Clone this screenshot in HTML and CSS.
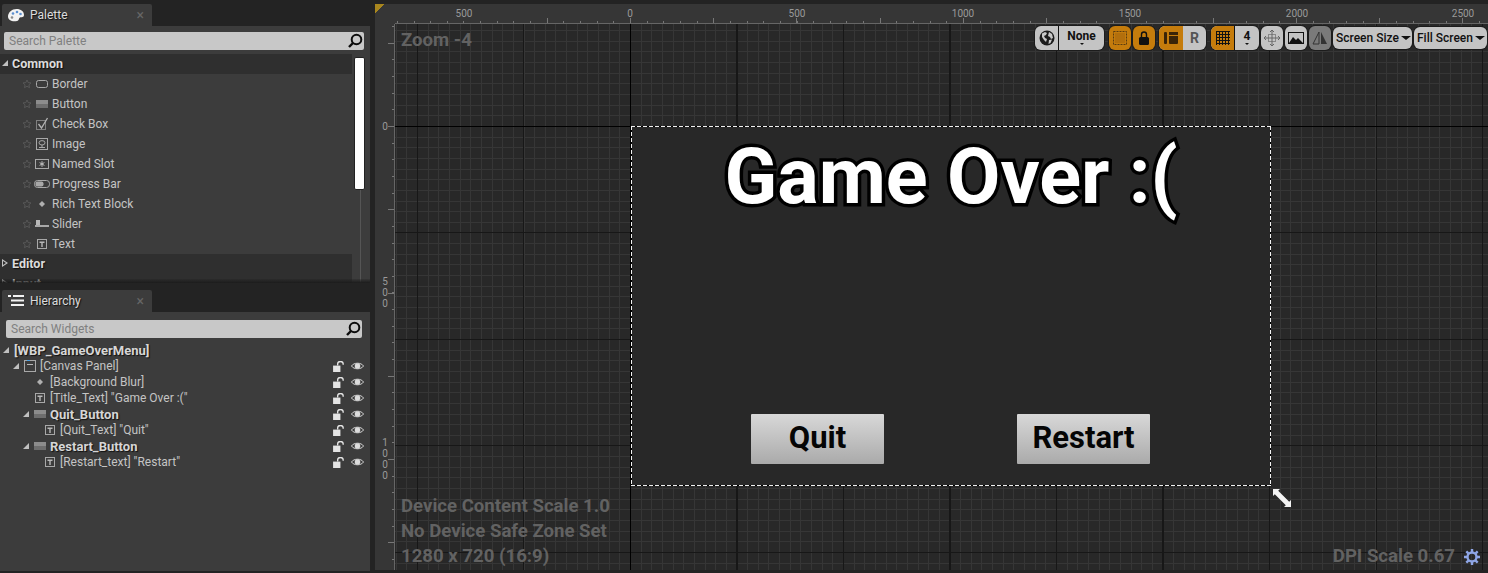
FILE: index.html
```html
<!DOCTYPE html>
<html lang="en">
<head>
  <meta charset="UTF-8" />
  <title>WBP_GameOverMenu</title>
  <link rel="stylesheet" href="styles.css">
</head>
<body>
  <svg class="sprites" width="0" height="0">
    <symbol id="i-star" viewBox="0 0 12 12"><path d="M6 1.2l1.4 3.1 3.4.4-2.5 2.3.7 3.4-3-1.7-3 1.7.7-3.4L1.2 4.7l3.4-.4z" fill="none" stroke="#5c5c5c"/></symbol>
    <symbol id="i-border" viewBox="0 0 14 14"><rect x="1.5" y="3.5" width="11" height="7" rx="2" fill="none" stroke="#a8a8a8"/></symbol>
    <symbol id="i-button" viewBox="0 0 14 14"><rect x="1" y="3" width="12" height="4" fill="#8c8c8c"/><rect x="1" y="7" width="12" height="4" fill="#6e6e6e"/></symbol>
    <symbol id="i-check" viewBox="0 0 14 14"><rect x="1.5" y="3.5" width="9" height="9" fill="none" stroke="#808080"/><path d="M3.5 7l3 4 6-10" fill="none" stroke="#b4b4b4" stroke-width="1.3"/></symbol>
    <symbol id="i-image" viewBox="0 0 14 14"><rect x="1.5" y="1.5" width="11" height="11" fill="none" stroke="#a8a8a8"/><ellipse cx="7" cy="5.8" rx="3" ry="2.2" fill="none" stroke="#a8a8a8"/><path d="M7 8v2.5M4 10.5h6" stroke="#a8a8a8"/></symbol>
    <symbol id="i-slot" viewBox="0 0 14 14"><rect x=".5" y="2.5" width="13" height="9" fill="none" stroke="#a8a8a8"/><path d="M7 4.2v5.6M4.6 5.6l4.8 2.8M9.4 5.6L4.6 8.4" stroke="#c0c0c0"/></symbol>
    <symbol id="i-progress" viewBox="0 0 16 14"><rect x=".5" y="3.5" width="15" height="7" rx="3" fill="none" stroke="#a8a8a8"/><rect x="1.5" y="4.5" width="8" height="5" rx="2" fill="#a8a8a8"/></symbol>
    <symbol id="i-diamond" viewBox="0 0 14 14"><path d="M7 4l3 3-3 3-3-3z" fill="#b0b0b0"/></symbol>
    <symbol id="i-slider" viewBox="0 0 14 14"><rect x="1" y="3" width="4" height="5" fill="#b8b8b8"/><rect x="0" y="8" width="14" height="2" fill="#a8a8a8"/></symbol>
    <symbol id="i-text" viewBox="0 0 14 14"><rect x="2.5" y="2.5" width="9" height="9" fill="none" stroke="#a8a8a8"/><path d="M4.5 4.5h5v1.4H7.7v4H6.3v-4H4.5z" fill="#b8b8b8"/></symbol>
    <symbol id="i-canvas" viewBox="0 0 14 14"><rect x="1.5" y="1.5" width="11" height="11" fill="none" stroke="#a8a8a8"/><path d="M4 5.5h6" stroke="#b8b8b8"/><path d="M4 1.5h3" stroke="#4aa3e8"/></symbol>
    <symbol id="i-lock-open" viewBox="0 0 14 12"><rect x="0" y="5" width="8" height="7" fill="#e4e4e4"/><path d="M5 5V3a3 2.5 0 0 1 6 0v1" fill="none" stroke="#e4e4e4" stroke-width="1.5"/></symbol>
    <symbol id="i-eye" viewBox="0 0 14 10"><path d="M.5 5C3 1 11 1 13.5 5 11 9 3 9 .5 5z" fill="none" stroke="#dcdcdc"/><circle cx="7" cy="5" r="3" fill="#dcdcdc"/></symbol>
    <symbol id="i-search" viewBox="0 0 16 16"><circle cx="9.5" cy="6.5" r="4.8" fill="none" stroke="#0c0c0c" stroke-width="2"/><path d="M6 10l-4 4" stroke="#0c0c0c" stroke-width="2.4"/></symbol>
  </svg>

  <aside class="side">
    <section class="dock">
      <div class="tab">
        <svg class="tab-icon" viewBox="0 0 16 14"><path d="M8.5 1C13 1 16 3.5 16 7c0 2.5-2.5 2-4 2.5s-.5 3-3 3.500C4 14 0 12 0 8.500 0 4.500 4 1 8.500 1z" fill="#f2f2f2"/><circle cx="5" cy="5.5" r="1.3" fill="#5b8fd0"/><circle cx="9" cy="4" r="1.3" fill="#5b8fd0"/><circle cx="12.5" cy="6" r="1.3" fill="#5b8fd0"/><circle cx="4" cy="9.5" r="1.3" fill="#8a8a8a"/></svg>
        <span class="tab-label">Palette</span>
        <span class="tab-close">&#215;</span>
      </div>
      <div class="panel palette-panel">
        <div class="search palette-search">
          <span>Search Palette</span>
          <svg class="search-icon"><use href="#i-search"/></svg>
        </div>
        <div class="palette-body">
          <div class="palette-list">
            <div class="group-head"><span class="arrow-open"></span>Common</div>
            <div class="item"><svg class="star"><use href="#i-star"/></svg><svg class="item-icon"><use href="#i-border"/></svg>Border</div>
            <div class="item"><svg class="star"><use href="#i-star"/></svg><svg class="item-icon"><use href="#i-button"/></svg>Button</div>
            <div class="item"><svg class="star"><use href="#i-star"/></svg><svg class="item-icon"><use href="#i-check"/></svg>Check Box</div>
            <div class="item"><svg class="star"><use href="#i-star"/></svg><svg class="item-icon"><use href="#i-image"/></svg>Image</div>
            <div class="item"><svg class="star"><use href="#i-star"/></svg><svg class="item-icon"><use href="#i-slot"/></svg>Named Slot</div>
            <div class="item"><svg class="star"><use href="#i-star"/></svg><svg class="item-icon"><use href="#i-progress"/></svg>Progress Bar</div>
            <div class="item"><svg class="star"><use href="#i-star"/></svg><svg class="item-icon"><use href="#i-diamond"/></svg>Rich Text Block</div>
            <div class="item"><svg class="star"><use href="#i-star"/></svg><svg class="item-icon"><use href="#i-slider"/></svg>Slider</div>
            <div class="item"><svg class="star"><use href="#i-star"/></svg><svg class="item-icon"><use href="#i-text"/></svg>Text</div>
            <div class="group-head"><span class="arrow-closed"></span>Editor</div>
            <div class="group-head"><span class="arrow-closed"></span>Input</div>
          </div>
          <div class="scrollbar"><div class="scroll-thumb"></div></div>
        </div>
      </div>
    </section>

    <section class="dock hierarchy">
      <div class="tab">
        <svg class="tab-icon" viewBox="0 0 16 14"><path d="M0 1h3v2H0zM5 1h11v2H5zM3 5.5h2v2H3zM5 5.5h11v2H5zM3 10h2v2H3zM5 10h11v2H5z" fill="#f2f2f2"/></svg>
        <span class="tab-label">Hierarchy</span>
        <span class="tab-close">&#215;</span>
      </div>
      <div class="panel hierarchy-panel">
        <div class="search widget-search">
          <span>Search Widgets</span>
          <svg class="search-icon"><use href="#i-search"/></svg>
        </div>
        <div class="tree">
          <div class="node depth-0 strong"><span class="arrow-slot"><span class="arrow-open"></span></span><span class="root-name">[WBP_GameOverMenu]</span></div>
          <div class="node depth-1"><span class="arrow-slot"><span class="arrow-open"></span></span><svg class="node-icon"><use href="#i-canvas"/></svg>[Canvas Panel]<span class="node-tools"><svg class="lock"><use href="#i-lock-open"/></svg><svg class="eye"><use href="#i-eye"/></svg></span></div>
          <div class="node depth-2"><span class="arrow-slot"></span><svg class="node-icon"><use href="#i-diamond"/></svg>[Background Blur]<span class="node-tools"><svg class="lock"><use href="#i-lock-open"/></svg><svg class="eye"><use href="#i-eye"/></svg></span></div>
          <div class="node depth-2"><span class="arrow-slot"></span><svg class="node-icon"><use href="#i-text"/></svg>[Title_Text] "Game Over :("<span class="node-tools"><svg class="lock"><use href="#i-lock-open"/></svg><svg class="eye"><use href="#i-eye"/></svg></span></div>
          <div class="node depth-2 strong"><span class="arrow-slot"><span class="arrow-open"></span></span><svg class="node-icon"><use href="#i-button"/></svg>Quit_Button<span class="node-tools"><svg class="lock"><use href="#i-lock-open"/></svg><svg class="eye"><use href="#i-eye"/></svg></span></div>
          <div class="node depth-3"><span class="arrow-slot"></span><svg class="node-icon"><use href="#i-text"/></svg>[Quit_Text] "Quit"<span class="node-tools"><svg class="lock"><use href="#i-lock-open"/></svg><svg class="eye"><use href="#i-eye"/></svg></span></div>
          <div class="node depth-2 strong"><span class="arrow-slot"><span class="arrow-open"></span></span><svg class="node-icon"><use href="#i-button"/></svg>Restart_Button<span class="node-tools"><svg class="lock"><use href="#i-lock-open"/></svg><svg class="eye"><use href="#i-eye"/></svg></span></div>
          <div class="node depth-3"><span class="arrow-slot"></span><svg class="node-icon"><use href="#i-text"/></svg>[Restart_text] "Restart"<span class="node-tools"><svg class="lock"><use href="#i-lock-open"/></svg><svg class="eye"><use href="#i-eye"/></svg></span></div>
        </div>
      </div>
    </section>
  </aside>

  <main class="viewport">
    <div class="ruler-row">
      <div class="corner"></div>
      <div class="ruler-top">
        <span class="mark-x" style="left:69px">500</span>
        <span class="mark-x" style="left:235px">0</span>
        <span class="mark-x" style="left:402px">500</span>
        <span class="mark-x" style="left:568px">1000</span>
        <span class="mark-x" style="left:735px">1500</span>
        <span class="mark-x" style="left:902px">2000</span>
        <span class="mark-x" style="left:1068px">2500</span>
      </div>
    </div>
    <div class="view-row">
      <div class="ruler-left">
        <span class="mark-y" style="top:102px">0</span>
        <span class="mark-y" style="top:268px">5<br>0<br>0</span>
        <span class="mark-y" style="top:435px">1<br>0<br>0<br>0</span>
      </div>
      <div class="canvas">
        <div class="frame">
          <h1 class="title">Game Over :(</h1>
          <div class="frame-buttons">
            <div class="game-button">Quit</div>
            <div class="game-button">Restart</div>
          </div>
        </div>
        <svg class="resize-handle" viewBox="0 0 18 18"><path d="M0 0h7L5.200 1.800 16.200 12.800 18 11v7h-7l1.800-1.800L1.800 5.200 0 7z" fill="#f4f4f4"/></svg>

        <div class="zoom-label">Zoom -4</div>
        <div class="device-info">
          <div>Device Content Scale 1.0</div>
          <div>No Device Safe Zone Set</div>
          <div>1280 x 720 (16:9)</div>
        </div>
        <div class="dpi-info">
          <span>DPI Scale 0.67</span>
          <svg class="gear" viewBox="0 0 16 16"><circle cx="8" cy="8" r="4.5" fill="none" stroke="#8fa6e6" stroke-width="2.4"/><path d="M8 0v3M8 13v3M0 8h3M13 8h3M2.300 2.300l2.100 2.100M11.600 11.600l2.100 2.100M13.700 2.300l-2.100 2.100M4.400 11.600l-2.100 2.100" stroke="#8fa6e6" stroke-width="2.4"/></svg>
        </div>

        <div class="toolbar">
          <div class="tool-group">
            <div class="tool cell-globe">
              <svg viewBox="0 0 16 16" class="ticon"><circle cx="8" cy="8" r="7.5" fill="#1c1c1c"/><path d="M3 3.500l3-1.500 2 1-1 2-2 1 1 2 2 1-1 3-2-2-2-3zM10 2l3 2 1 4-2 1-1-2-2-1zM10 10l3-.5-1.500 3.500-2 1z" fill="#c8c8c8"/></svg>
            </div>
            <div class="tool tool-drop cell-none">None<span class="mini-caret"></span></div>
          </div>
          <div class="tool-group single on wide-gap">
            <svg viewBox="0 0 16 16" class="ticon"><rect x="1.5" y="1.5" width="13" height="13" fill="none" stroke="#5a3c10" stroke-dasharray="2 1"/><rect x="3" y="3" width="10" height="10" fill="#b36f0c"/></svg>
          </div>
          <div class="tool-group single on">
            <svg viewBox="0 0 14 16" class="ticon"><rect x="2" y="7" width="10" height="8" rx="1.5" fill="#111"/><path d="M4.500 7V4.500a2.500 2.500 0 0 1 5 0V7" fill="none" stroke="#111" stroke-width="1.4"/></svg>
          </div>
          <div class="tool-group mid-gap">
            <div class="tool cell-layout on">
              <svg viewBox="0 0 16 14" class="ticon"><rect x="1" y="1" width="3" height="12" rx="1" fill="#3a2408"/><path d="M6 1h9v3H6zM6 5h9v7a1 1 0 0 1-1 1H7a1 1 0 0 1-1-1z" fill="#3a2408"/></svg>
            </div>
            <div class="tool cell-r">R</div>
          </div>
          <div class="tool-group wide-gap">
            <div class="tool cell-grid on">
              <svg viewBox="0 0 14 14" class="ticon grid-icon"><path d="M.5 0v14M3.500 0v14M6.500 0v14M9.500 0v14M12.500 0v14M0 .5h14M0 3.500h14M0 6.500h14M0 9.500h14M0 12.500h14" stroke="#111"/></svg>
            </div>
            <div class="tool tool-drop cell-four">4<span class="mini-caret"></span></div>
          </div>
          <div class="tool-group single plain">
            <svg viewBox="0 0 16 16" class="ticon"><rect x="4.5" y="4.5" width="7" height="7" fill="none" stroke="#888"/><path d="M0 8h16M8 0v16M2 6l-2 2 2 2M14 6l2 2-2 2M6 2l2-2 2 2M6 14l2 2 2-2" fill="none" stroke="#666"/></svg>
          </div>
          <div class="tool-group single plain">
            <svg viewBox="0 0 16 14" class="ticon"><rect x=".5" y="1.5" width="15" height="11" fill="none" stroke="#111"/><path d="M1 12l4-6 3 3 2-2 5 5z" fill="#111"/></svg>
          </div>
          <div class="tool-group single dim">
            <svg viewBox="0 0 16 14" class="ticon"><path d="M7 1v12H1z" fill="none" stroke="#333"/><path d="M9 1v12h6z" fill="#333"/></svg>
          </div>
          <div class="tool-group pick pick-screen">Screen Size<span class="caret"></span></div>
          <div class="tool-group pick pick-fill">Fill Screen<span class="caret"></span></div>
        </div>
      </div>
    </div>
  </main>
</body>
</html>
```

FILE: styles.css
```css
* {
  box-sizing: border-box;
}

html, body {
  height: 100%;
}

body {
  margin: 0;
  width: 1488px;
  height: 573px;
  overflow: hidden;
  display: flex;
  background: #232323;
  font-family: Roboto, "Liberation Sans", sans-serif;
  font-size: 12px;
  color: #c4c4c4;
}

.sprites {
  position: absolute;
}

/* left docks */
.side {
  width: 375px;
  flex: none;
  display: flex;
  flex-direction: column;
}

.dock {
  display: flex;
  flex-direction: column;
  padding-top: 4px;
}

.hierarchy {
  padding-top: 7px;
  flex: 1;
}

.tab {
  width: 150px;
  height: 22px;
  margin-left: 2px;
  display: flex;
  align-items: center;
  padding-left: 6px;
  background: #3c3c3c;
  border-radius: 2px 2px 0 0;
}

.tab-icon {
  width: 16px;
  height: 14px;
  margin-right: 6px;
}

.tab-label {
  color: #dcdcdc;
  text-shadow: 1px 1px 1px #111;
}

.tab-close {
  margin-left: auto;
  margin-right: 8px;
  color: #666;
  font-size: 14px;
}

.panel {
  width: 370px;
  background: #3c3c3c;
}

.palette-panel {
  position: relative;
  height: 257px;
  padding-top: 6px;
  overflow: hidden;
}

/* shade where the list runs under the splitter */
.palette-panel::after {
  content: "";
  position: absolute;
  left: 0;
  right: 0;
  bottom: 0;
  height: 4px;
  background: linear-gradient(rgba(28, 28, 28, 0.2), #1c1c1c);
}

.hierarchy-panel {
  height: 259px;
  padding-top: 8px;
}

.search {
  height: 18px;
  display: flex;
  align-items: center;
  justify-content: space-between;
  padding: 0 1px 0 5px;
  background: #c8c8c8;
  border-radius: 2px;
  color: #808080;
}

.palette-search {
  width: 360px;
  margin-left: 4px;
}

.widget-search {
  width: 356px;
  margin-left: 6px;
}

.search-icon {
  width: 16px;
  height: 16px;
}

.palette-body {
  display: flex;
  margin-top: 4px;
}

.palette-list {
  width: 352px;
  flex: none;
}

.group-head {
  height: 20px;
  display: flex;
  align-items: center;
  padding-bottom: 2px;
  background: #2f2f2f;
  font-weight: 700;
  font-size: 12.5px;
  color: #dcdcdc;
  text-shadow: 1px 1px 1px #111;
}

.group-head > span {
  margin: 0 4px 0 2px;
}

.arrow-open {
  display: block;
  width: 0;
  height: 0;
  border-style: solid;
  border-width: 0 0 6px 6px;
  border-color: transparent transparent #c0c0c0 transparent;
}

.arrow-closed {
  display: block;
  width: 6px;
  height: 8px;
  background: #c0c0c0;
  clip-path: polygon(0 0, 100% 50%, 0 100%, 0 0, 1px 2px, 1px 6px, 4px 4px, 1px 2px);
}

.item {
  height: 20px;
  display: flex;
  align-items: center;
  padding-left: 22px;
}

.star {
  width: 10px;
  height: 10px;
  margin-right: 2px;
  flex: none;
}

.item-icon {
  width: 16px;
  height: 14px;
  margin-right: 2px;
  flex: none;
}

.scrollbar {
  width: 12px;
  height: 230px;
  margin-left: 2px;
  margin-top: 3px;
  background: linear-gradient(#555, #555) center / 1px 100% no-repeat;
}

.scroll-thumb {
  width: 11px;
  height: 133px;
  background: #fff;
  border: 1px solid #222;
  border-radius: 2px;
}

/* hierarchy tree */
.tree {
  padding-top: 4px;
}

.node {
  height: 16px;
  display: flex;
  align-items: center;
  padding-right: 6px;
}

.strong {
  font-weight: 700;
  font-size: 13px;
  color: #d6d6d6;
  text-shadow: 1px 1px 1px #111;
}

.depth-0 { padding-left: 3px; }
.depth-1 { padding-left: 13px; }
.depth-2 { padding-left: 23px; }
.depth-3 { padding-left: 33px; }

.arrow-slot {
  width: 10px;
  flex: none;
}

.root-name {
  margin-left: 1px;
}

.node-icon {
  width: 14px;
  height: 14px;
  margin-right: 3px;
  flex: none;
}

.node-tools {
  margin-left: auto;
  display: flex;
  align-items: center;
  gap: 5px;
}

.lock {
  width: 13px;
  height: 11px;
}

.eye {
  width: 13px;
  height: 10px;
}

/* viewport */
.viewport {
  flex: 1;
  min-width: 0;
  padding-top: 4px;
  display: flex;
  flex-direction: column;
}

.ruler-row {
  display: flex;
  height: 20px;
  flex: none;
  background: #363636;
}

.corner {
  width: 20px;
  flex: none;
  background: linear-gradient(135deg, #a8861e 0 7px, transparent 7px);
}

.ruler-top {
  position: relative;
  flex: 1;
  border-bottom: 1px solid #666;
  background-image:
    repeating-linear-gradient(90deg, transparent 0 68.5px, #777 68.5px 69.5px, transparent 69.5px 83.25px),
    repeating-linear-gradient(90deg, transparent 0 1.9px, #777 1.9px 2.9px, transparent 2.9px 16.65px);
  background-size: 100% 5px, 100% 2px;
  background-position: left bottom, left bottom;
  background-repeat: no-repeat;
}

.mark-x {
  position: absolute;
  top: 4px;
  transform: translateX(-50%);
  font-size: 10px;
  line-height: 12px;
  color: #9a9a9a;
}

.view-row {
  flex: 1;
  min-height: 0;
  display: flex;
  margin-bottom: 3px;
}

.ruler-left {
  position: relative;
  width: 20px;
  flex: none;
  background-color: #363636;
  border-right: 1px solid #666;
  background-image:
    repeating-linear-gradient(180deg, transparent 0 18.75px, #777 18.75px 19.75px, transparent 19.75px 83.25px),
    repeating-linear-gradient(180deg, transparent 0 2.1px, #777 2.1px 3.1px, transparent 3.1px 16.65px);
  background-size: 6px 100%, 2px 100%;
  background-position: right top, right top;
  background-repeat: no-repeat;
}

.mark-y {
  position: absolute;
  left: 5px;
  width: 10px;
  text-align: center;
  transform: translateY(-50%);
  font-size: 10px;
  line-height: 11px;
  color: #9a9a9a;
}

.canvas {
  position: relative;
  flex: 1;
  overflow: hidden;
  background-color: #282828;
  background-image:
    linear-gradient(#000, #000),
    linear-gradient(#000, #000),
    repeating-linear-gradient(90deg, transparent 0 22px, #171717 22px 23px, transparent 23px 106.5px),
    repeating-linear-gradient(180deg, transparent 0 102px, #171717 102px 103px, transparent 103px 106.5px),
    repeating-linear-gradient(90deg, transparent 0 .7px, #363636 .7px 1.7px, transparent 1.7px 10.65px),
    repeating-linear-gradient(180deg, transparent 0 6.15px, #363636 6.15px 7.15px, transparent 7.15px 10.65px);
  background-size: 1px 100%, 100% 1px, auto, auto, auto, auto;
  background-position: 235px 0, 0 102px, 0 0, 0 0, 0 0, 0 0;
  background-repeat: no-repeat, no-repeat, repeat, repeat, repeat, repeat;
}

.frame {
  position: absolute;
  left: 236px;
  top: 102px;
  width: 640px;
  height: 360px;
  display: flex;
  flex-direction: column;
  justify-content: space-between;
  padding: 0 121px 22px 120px;
  background-color: #282828;
  background-image:
    repeating-linear-gradient(90deg, #f0f0f0 0 4px, #000 4px 6px),
    repeating-linear-gradient(90deg, #f0f0f0 0 4px, #000 4px 6px),
    repeating-linear-gradient(180deg, #f0f0f0 0 4px, #000 4px 6px),
    repeating-linear-gradient(180deg, #f0f0f0 0 4px, #000 4px 6px);
  background-size: 100% 1px, 100% 1px, 1px 100%, 1px 100%;
  background-position: 0 0, 0 100%, 0 0, 100% 0;
  background-repeat: no-repeat;
}

.title {
  margin: 6px -121px 0 -120px;
  text-align: center;
  font-size: 77.5px;
  line-height: 90px;
  font-weight: 700;
  color: #fff;
  -webkit-text-stroke: 7px #000;
  paint-order: stroke fill;
  text-shadow: 2px 2px 0 #000;
}

.frame-buttons {
  display: flex;
  justify-content: space-between;
}

.game-button {
  width: 133px;
  height: 50px;
  display: flex;
  align-items: center;
  justify-content: center;
  padding-bottom: 3px;
  background: linear-gradient(#d8d8d8, #aaaaaa);
  border-radius: 1px;
  color: #050505;
  font-size: 31px;
  font-weight: 700;
}

.resize-handle {
  position: absolute;
  left: 878px;
  top: 465px;
  width: 18px;
  height: 18px;
}

.zoom-label, .device-info, .dpi-info {
  position: absolute;
  font-size: 18.6px;
  font-weight: 700;
  line-height: 25px;
  color: #626262;
}

.zoom-label {
  left: 6px;
  top: 4px;
}

.device-info {
  left: 6px;
  bottom: 1px;
}

.dpi-info {
  right: 8px;
  bottom: 1px;
  display: flex;
  align-items: center;
  gap: 9px;
}

.gear {
  width: 16px;
  height: 16px;
}

/* toolbar over the canvas */
.toolbar {
  position: absolute;
  top: 2px;
  left: 640px;
  display: flex;
  align-items: flex-start;
  gap: 2px;
  color: #111;
}

.tool-group {
  height: 24px;
  display: flex;
  overflow: hidden;
  background: #c4c4c4;
  border-radius: 6px;
  box-shadow: 0 0 0 1px #1c1c1c;
}

.wide-gap {
  margin-left: 3px;
}

.mid-gap {
  margin-left: 2px;
}

.tool {
  height: 100%;
  display: flex;
  align-items: center;
  justify-content: center;
}

.single {
  width: 22px;
  align-items: center;
  justify-content: center;
}

.on {
  background: #c57c0c;
}

.dim {
  background: #7a7a7a;
}

.ticon {
  width: 16px;
  height: 16px;
}

.cell-globe {
  width: 24px;
  border-right: 1px solid #111;
}

.cell-none {
  width: 45px;
}

.tool-drop {
  flex-direction: column;
  font-weight: 700;
  line-height: 14px;
  padding-bottom: 2px;
}

.mini-caret {
  width: 0;
  height: 0;
  border-style: solid;
  border-width: 2px 2px 0;
  border-color: #111 transparent transparent;
}

.cell-layout {
  width: 24px;
}

.cell-r {
  width: 23px;
  color: #555;
  font-weight: 700;
  font-size: 14px;
}

.cell-grid {
  width: 24px;
  border-right: 1px solid #111;
}

.grid-icon {
  width: 14px;
  height: 14px;
}

.cell-four {
  width: 24px;
}

.pick {
  height: 22px;
  margin-top: 1px;
  align-items: center;
  padding-left: 3px;
  font-weight: 500;
  white-space: nowrap;
}

.pick-screen {
  width: 79px;
}

.pick-fill {
  width: 73px;
}

.caret {
  margin-left: 2px;
  width: 0;
  height: 0;
  border-style: solid;
  border-width: 4px 5px 0;
  border-color: #111 transparent transparent;
}
```
